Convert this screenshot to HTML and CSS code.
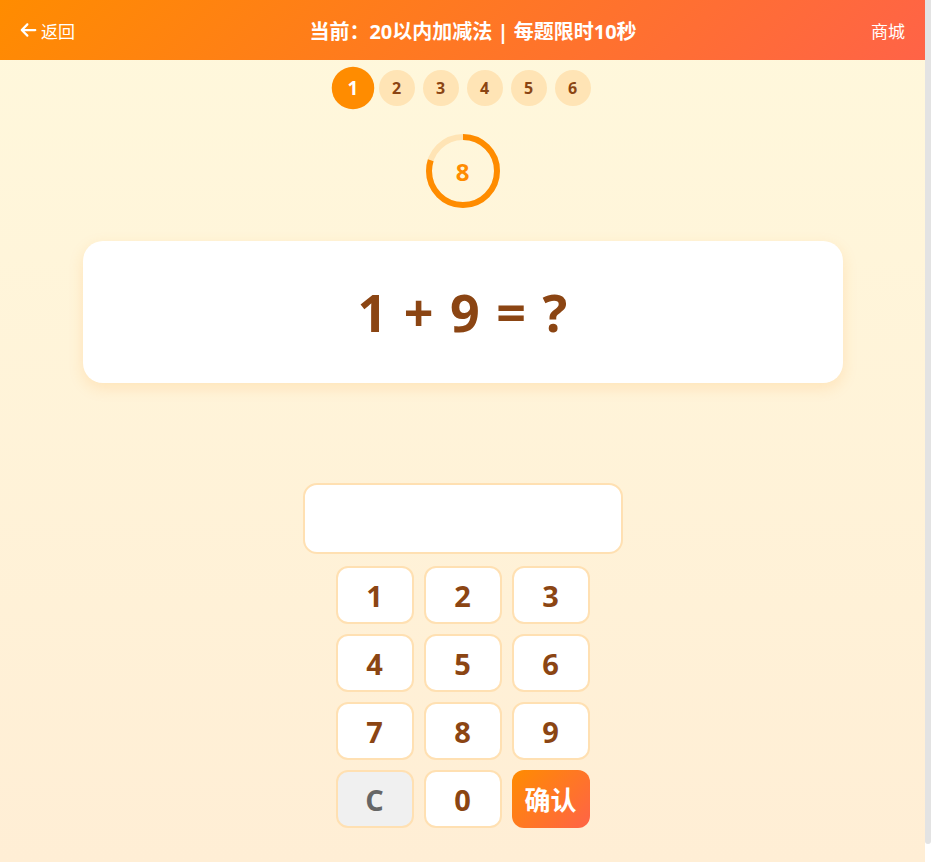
FILE: index.html
```html
<!DOCTYPE html>
<html lang="zh-CN">
<head>
    <meta charset="UTF-8">
    <meta name="viewport" content="width=device-width, initial-scale=1.0">
    <title>口算练习</title>
    <link rel="stylesheet" href="styles.css">
</head>
<body>
    <header class="top-bar">
        <a class="back-link" href="#">
            <svg class="back-icon" viewBox="0 0 448 512"><path d="M9.4 233.4c-12.5 12.5-12.5 32.8 0 45.3l160 160c12.5 12.5 32.8 12.5 45.3 0s12.5-32.8 0-45.3L109.2 288H416c17.7 0 32-14.3 32-32s-14.3-32-32-32H109.3L214.6 118.6c12.5-12.5 12.5-32.8 0-45.3s-32.8-12.5-45.3 0l-160 160z"/></svg>
            <span>返回</span>
        </a>
        <div class="top-title">当前：20以内加减法 | 每题限时10秒</div>
        <a class="shop-link" href="#">商城</a>
    </header>

    <main class="quiz">
        <div class="steps">
            <span class="step active">1</span>
            <span class="step">2</span>
            <span class="step">3</span>
            <span class="step">4</span>
            <span class="step">5</span>
            <span class="step">6</span>
        </div>

        <div class="timer">
            <svg class="timer-ring" viewBox="0 0 74 74">
                <circle class="ring-track" cx="37" cy="37" r="34"/>
                <circle class="ring-bar" cx="37" cy="37" r="34" stroke-dasharray="170.9 213.6"/>
            </svg>
            <span class="timer-num">8</span>
        </div>

        <div class="question-card">1 + 9 = ?</div>

        <div class="answer-box"></div>

        <div class="keypad">
            <button class="key">1</button>
            <button class="key">2</button>
            <button class="key">3</button>
            <button class="key">4</button>
            <button class="key">5</button>
            <button class="key">6</button>
            <button class="key">7</button>
            <button class="key">8</button>
            <button class="key">9</button>
            <button class="key key-clear">C</button>
            <button class="key">0</button>
            <button class="key key-ok">确认</button>
        </div>
    </main>

    <div class="scroll-thumb"></div>
</body>
</html>
```

FILE: styles.css
```css
html {
    background: #fff;
}
body {
    margin: 0 6px 0 0;
    min-height: 100vh;
    font-family: "Open Sans", "Noto Sans CJK SC", sans-serif;
    background: linear-gradient(180deg, #FFF8DC, #FFEED5);
    color: #8B4513;
}
/* slim scrollbar look on the right edge */
.scroll-thumb {
    position: fixed;
    top: 0;
    right: 0;
    width: 6px;
    height: 844px;
    background: #e3e3e3;
    border-radius: 0 0 3px 3px;
}
.top-bar {
    height: 60px;
    padding: 0 20px;
    display: flex;
    align-items: center;
    justify-content: space-between;
    background: linear-gradient(135deg, #FF8C00, #FF6347);
    color: #fff;
}
.back-link, .shop-link {
    color: #fff;
    text-decoration: none;
    font-size: 17px;
}
.back-link {
    display: flex;
    align-items: center;
    gap: 4px;
}
.back-icon {
    width: 17px;
    height: 18px;
    fill: #fff;
}
.top-title {
    font-size: 20px;
    font-weight: bold;
}
.quiz {
    display: flex;
    flex-direction: column;
    align-items: center;
    padding: 10px 0 30px;
}
.steps {
    display: flex;
    gap: 8px;
    align-items: center;
}
.step {
    width: 36px;
    height: 36px;
    border-radius: 50%;
    background: #FFE4B5;
    display: flex;
    align-items: center;
    justify-content: center;
    font-size: 16px;
    font-weight: bold;
}
.step.active {
    background: #FF8C00;
    color: #fff;
    transform: scale(1.18);
}
.timer {
    position: relative;
    width: 74px;
    height: 74px;
    margin-top: 28px;
    display: flex;
    align-items: center;
    justify-content: center;
}
.timer-ring {
    position: absolute;
    inset: 0;
    transform: rotate(-90deg);
}
.ring-track, .ring-bar {
    fill: none;
    stroke-width: 6;
}
.ring-track {
    stroke: #FFE4B5;
}
.ring-bar {
    stroke: #FF8C00;
}
.timer-num {
    position: relative;
    font-size: 24px;
    font-weight: bold;
    color: #FF8C00;
}
.question-card {
    width: 760px;
    margin-top: 33px;
    padding: 40px 0;
    line-height: 62px;
    background: #fff;
    border-radius: 20px;
    box-shadow: 0 5px 15px rgba(255, 140, 0, 0.15);
    text-align: center;
    font-size: 52px;
    font-weight: bold;
    word-spacing: 3px;
}
.answer-box {
    width: 320px;
    height: 71px;
    margin-top: 100px;
    box-sizing: border-box;
    background: #fff;
    border: 2px solid #FFE0B2;
    border-radius: 14px;
}
.keypad {
    margin-top: 12px;
    display: grid;
    grid-template-columns: repeat(3, 78px);
    grid-auto-rows: 58px;
    gap: 10px;
}
.key {
    box-sizing: border-box;
    border: 2px solid #FFE0B2;
    border-radius: 12px;
    background: #fff;
    color: #8B4513;
    font-family: inherit;
    font-size: 29px;
    font-weight: bold;
    cursor: pointer;
    padding: 0;
}
.key-clear {
    background: #f0f0f0;
    color: #666;
}
.key-ok {
    border: none;
    background: linear-gradient(135deg, #FF8C00, #FF6347);
    color: #fff;
    font-size: 26px;
}
```
